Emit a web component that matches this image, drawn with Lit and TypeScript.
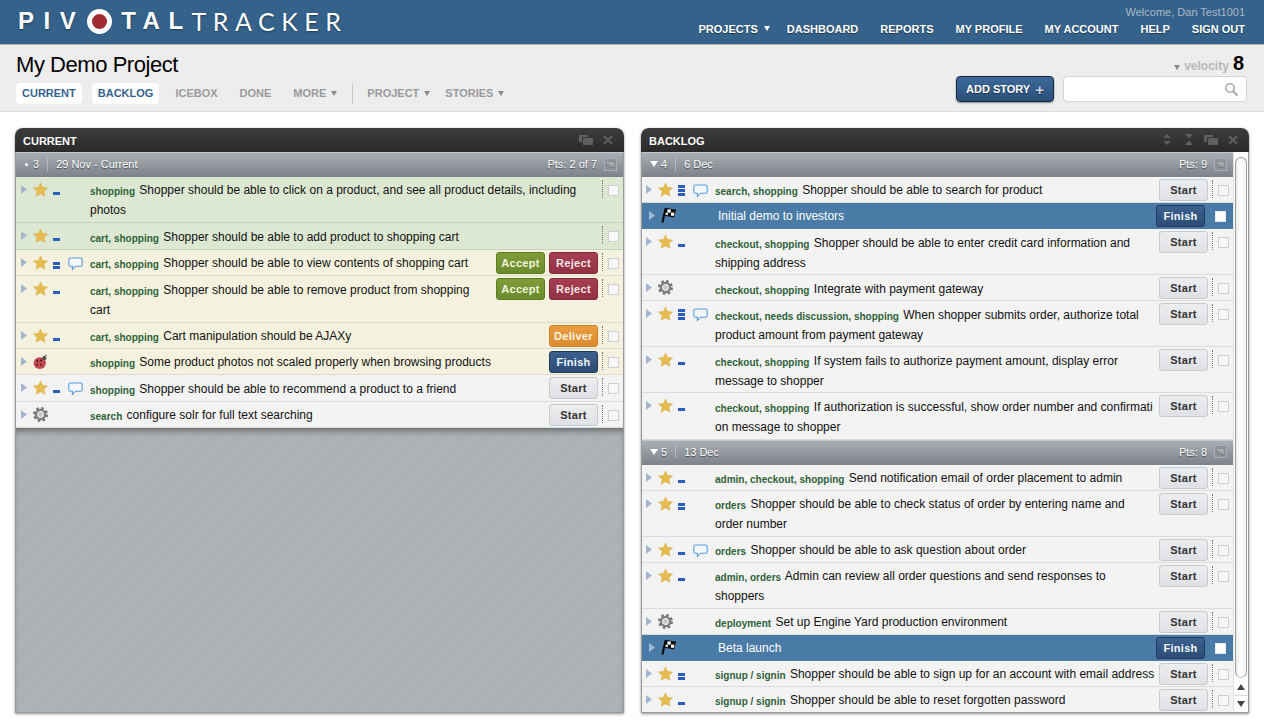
import { LitElement, css, html, svg } from 'lit';
import { customElement } from 'lit/decorators.js';

type Story = {
  kind?: 'star' | 'bug' | 'chore' | 'release';
  pts?: number;
  comment?: boolean;
  labels?: string;
  text: string;
  btn?: string[];
  tone?: string;
};

const currentStories: Story[] = [
  { kind: 'star', pts: 1, labels: 'shopping', text: 'Shopper should be able to click on a product, and see all product details, including photos', tone: 'accepted' },
  { kind: 'star', pts: 1, labels: 'cart, shopping', text: 'Shopper should be able to add product to shopping cart', tone: 'accepted' },
  { kind: 'star', pts: 2, comment: true, labels: 'cart, shopping', text: 'Shopper should be able to view contents of shopping cart', btn: ['Accept', 'Reject'], tone: 'delivered' },
  { kind: 'star', pts: 1, labels: 'cart, shopping', text: 'Shopper should be able to remove product from shopping cart', btn: ['Accept', 'Reject'], tone: 'delivered' },
  { kind: 'star', pts: 1, labels: 'cart, shopping', text: 'Cart manipulation should be AJAXy', btn: ['Deliver'], tone: 'delivered' },
  { kind: 'bug', labels: 'shopping', text: 'Some product photos not scaled properly when browsing products', btn: ['Finish'], tone: 'delivered' },
  { kind: 'star', pts: 1, comment: true, labels: 'shopping', text: 'Shopper should be able to recommend a product to a friend', btn: ['Start'] },
  { kind: 'chore', labels: 'search', text: 'configure solr for full text searching', btn: ['Start'] },
];

const backlogFirst: Story[] = [
  { kind: 'star', pts: 3, comment: true, labels: 'search, shopping', text: 'Shopper should be able to search for product', btn: ['Start'] },
  { kind: 'release', text: 'Initial demo to investors', btn: ['Finish'] },
  { kind: 'star', pts: 1, labels: 'checkout, shopping', text: 'Shopper should be able to enter credit card information and shipping address', btn: ['Start'] },
  { kind: 'chore', labels: 'checkout, shopping', text: 'Integrate with payment gateway', btn: ['Start'] },
  { kind: 'star', pts: 3, comment: true, labels: 'checkout, needs discussion, shopping', text: 'When shopper submits order, authorize total product amount from payment gateway', btn: ['Start'] },
  { kind: 'star', pts: 1, labels: 'checkout, shopping', text: 'If system fails to authorize payment amount, display error message to shopper', btn: ['Start'] },
  { kind: 'star', pts: 1, labels: 'checkout, shopping', text: 'If authorization is successful, show order number and confirmati\u200Bon message to shopper', btn: ['Start'] },
];

const backlogSecond: Story[] = [
  { kind: 'star', pts: 1, labels: 'admin, checkout, shopping', text: 'Send notification email of order placement to admin', btn: ['Start'] },
  { kind: 'star', pts: 2, labels: 'orders', text: 'Shopper should be able to check status of order by entering name and order number', btn: ['Start'] },
  { kind: 'star', pts: 1, comment: true, labels: 'orders', text: 'Shopper should be able to ask question about order', btn: ['Start'] },
  { kind: 'star', pts: 1, labels: 'admin, orders', text: 'Admin can review all order questions and send responses to shoppers', btn: ['Start'] },
  { kind: 'chore', labels: 'deployment', text: 'Set up Engine Yard production environment', btn: ['Start'] },
  { kind: 'release', text: 'Beta launch', btn: ['Finish'] },
  { kind: 'star', pts: 2, labels: 'signup / signin', text: 'Shopper should be able to sign up for an account with email address', btn: ['Start'] },
  { kind: 'star', pts: 1, labels: 'signup / signin', text: 'Shopper should be able to reset forgotten password', btn: ['Start'] },
];

const starIcon = html`<svg class="type" width="15" height="15" viewBox="0 0 16 15"><polygon points="8,0.5 10.2,5.3 15.5,5.9 11.6,9.4 12.7,14.6 8,12 3.3,14.6 4.4,9.4 0.5,5.9 5.8,5.3" fill="#e6bb50" stroke="#d9ad42" stroke-width=".6"/></svg>`;

const bugIcon = html`<svg class="type" width="15" height="16" viewBox="0 0 16 16">
  <path d="M11 3 L14.5 0.6" stroke="#666" stroke-width="1.2"/>
  <ellipse cx="7.2" cy="9.2" rx="6.6" ry="6.2" fill="#c2484f"/>
  <circle cx="12" cy="4" r="2.2" fill="#5a4a4a"/>
  <circle cx="4.6" cy="6.8" r="1.1" fill="#5a2025"/><circle cx="8.6" cy="6.4" r="1.1" fill="#5a2025"/>
  <circle cx="4.2" cy="11" r="1.1" fill="#5a2025"/><circle cx="8.6" cy="11" r="1.1" fill="#5a2025"/>
</svg>`;

const choreIcon = html`<svg class="type" width="15" height="15" viewBox="0 0 15 15">
  <circle cx="7.5" cy="7.5" r="6" fill="none" stroke="#747474" stroke-width="3" stroke-dasharray="2.4 2.3"/>
  <circle cx="7.5" cy="7.5" r="4.6" fill="none" stroke="#7e7e7e" stroke-width="2.4"/>
  <circle cx="7.5" cy="7.5" r="2.4" fill="#c8c8c8"/>
</svg>`;

const flagIcon = html`<svg class="flag" width="16" height="16" viewBox="0 0 16 16">
  <path d="M4.5 1.5 L1.5 15.5" stroke="#000" stroke-width="1.9"/>
  <path d="M4.5 1 C7 0 9 3 15 2 L13.5 10 C9 11 7 8 3 9.5 Z" fill="#111"/>
  <rect x="6.5" y="2.4" width="3.2" height="3.2" fill="#fff"/><rect x="10" y="5.6" width="3.2" height="3.2" fill="#fff"/>
  <rect x="4.6" y="5.8" width="2.4" height="2" fill="#fff"/>
</svg>`;

const commentIcon = html`<svg class="comment" width="15" height="15" viewBox="0 0 15 15"><path d="M2.5 1 H12.5 Q14.2 1 14.2 2.8 V7.4 Q14.2 9.2 12.5 9.2 H7.6 L4.4 12.4 V9.2 H2.5 Q0.8 9.2 0.8 7.4 V2.8 Q0.8 1 2.5 1 Z" fill="#f2f7fc" stroke="#5b9ad8" stroke-width="1.1"/></svg>`;

const windowIcon = svg`<path d="M0 0 H9 V2 H3 V7 H0 Z" fill="#5f5f5f"/><rect x="4" y="3" width="10" height="7" fill="#5f5f5f"/>`;
const closeIcon = svg`<path d="M1 1 L9 9 M9 1 L1 9" stroke="#5f5f5f" stroke-width="2"/>`;

@customElement('app-root')
export class AppRoot extends LitElement {
  static styles = css`
    :host {
      display: block;
      height: 724px;
      overflow: hidden;
      background: #fff;
      font-family: 'Liberation Sans', Arial, sans-serif;
      font-size: 12px;
      color: #111;
    }
    .caret {
      display: inline-block;
      width: 0;
      height: 0;
      border-left: 3px solid transparent;
      border-right: 3px solid transparent;
      border-top: 5px solid currentColor;
    }
    .top {
      height: 44px;
      background: #35628a;
      border-bottom: 1px solid #aeb2b5;
      display: flex;
      justify-content: space-between;
      padding: 0 19px 0 18px;
    }
    .logo {
      display: flex;
      align-items: center;
      height: 43px;
      padding-bottom: 1px;
      box-sizing: border-box;
      color: #fff;
      font-size: 24px;
      letter-spacing: 9.5px;
      text-shadow: 0 1px 2px rgba(0, 0, 0, .4);
      white-space: nowrap;
    }
    .logo b { font-weight: 700; }
    .logo b.tal { letter-spacing: 8.5px; }
    .logo span { font-family: Lato, sans-serif; font-weight: 400; letter-spacing: 6.5px; font-size: 25px; }
    .logo i {
      width: 15px;
      height: 15px;
      border: 5px solid #fff;
      border-radius: 50%;
      background: #a02c32;
      margin: 0 9px 0 2px;
      flex: none;
    }
    .usernav { text-align: right; padding-top: 5px; }
    .welcome { font-size: 11px; line-height: 15px; color: #a9b9c8; }
    .links {
      display: flex;
      gap: 22px;
      margin-top: 2px;
      font-size: 11px;
      line-height: 15px;
      font-weight: 700;
      color: #fff;
      text-shadow: 0 1px 1px rgba(0, 0, 0, .45);
    }
    .links .caret { margin: 0 -5px 0 6px; vertical-align: 2px; }
    .sub {
      height: 66px;
      background: #ededed;
      border-bottom: 1px solid #dcdcdc;
      display: flex;
      justify-content: space-between;
      padding: 0 17px 0 16px;
    }
    h1 {
      margin: 7px 0 0;
      font-size: 22px;
      line-height: 26px;
      font-weight: 400;
      letter-spacing: -.45px;
      color: #000;
    }
    .tabs {
      display: flex;
      align-items: center;
      margin-top: 5px;
      height: 21px;
      font-size: 11px;
      font-weight: 700;
      color: #9a9a9a;
    }
    .tabs a { padding: 0 6px; margin-right: 10px; line-height: 21px; white-space: nowrap; }
    .tabs a.on { background: #fff; color: #33648f; border-radius: 4px; }
    .tabs a.on + a.on { margin-right: 16px; }
    .tabs a.plain { padding: 0; margin-right: 22px; }
    .tabs a.menu { margin-right: 15px; }
    .tabs .caret { margin-left: 5px; vertical-align: 1px; color: #8a8a8a; }
    .tabs .sep { width: 1px; height: 21px; background: #c9c9c9; margin: 0 14px 0 0; }
    .right { display: flex; flex-direction: column; align-items: flex-end; }
    .velocity {
      display: flex;
      align-items: baseline;
      margin-top: 7px;
      height: 24px;
      font-weight: 700;
      color: #b8b8b8;
      margin-right: 3px;
    }
    .velocity .caret { color: #888; margin: 0 4px 1px 0; }
    .velocity b { color: #000; font-size: 20px; margin-left: 4px; }
    .actions-top { display: flex; gap: 9px; }
    .add {
      width: 98px;
      height: 26px;
      box-sizing: border-box;
      border: 1px solid #12263c;
      border-radius: 4px;
      background: linear-gradient(#3c6a99, #2b4f7a);
      box-shadow: 0 1px 2px rgba(0, 0, 0, .4);
      color: #fff;
      font-size: 11px;
      font-weight: 700;
      display: flex;
      align-items: center;
      justify-content: center;
      gap: 5px;
      text-shadow: 0 1px 1px rgba(0, 0, 0, .5);
    }
    .add em { font-style: normal; font-size: 15px; font-weight: 700; color: #cdd8e3; line-height: 15px; }
    .search {
      width: 184px;
      height: 26px;
      box-sizing: border-box;
      background: #fff;
      border: 1px solid #d4d4d4;
      border-radius: 4px;
      display: flex;
      align-items: center;
      justify-content: flex-end;
      padding-right: 7px;
    }
    .main { display: flex; gap: 17px; padding: 16px 15px 0; }
    .panel {
      width: 609px;
      height: 585px;
      display: flex;
      flex-direction: column;
      box-shadow: 0 1px 3px rgba(0, 0, 0, .45);
      border-radius: 8px 8px 0 0;
      background: #fff;
    }
    .panel + .panel { width: 608px; }
    .panel + .panel .row { padding-left: 4px; }
    .panel + .panel .row.release { padding-left: 7px; }
    .phead {
      flex: none;
      height: 24px;
      box-sizing: border-box;
      border-radius: 8px 8px 0 0;
      background: linear-gradient(#3d3d3d, #2a2a2a);
      color: #fff;
      font-size: 11px;
      font-weight: 700;
      display: flex;
      align-items: center;
      padding: 1px 11px 0 8px;
      gap: 10px;
    }
    .phead span { flex: 1; }
    .phead svg { display: block; margin-bottom: 2px; }
    .phead svg.hourglass { margin-left: 2px; }
    .pbody {
      flex: 1;
      min-height: 0;
      display: flex;
      border: 1px solid #9a9a9a;
      border-width: 0 1px 1px;
    }
    .list { flex: 1; min-width: 0; overflow: hidden; display: flex; flex-direction: column; }
    .hatch {
      flex: 1;
      background: repeating-linear-gradient(135deg, #abb1b3 0 8px, #aeb4b6 8px 16px);
      box-shadow: inset 0 6px 6px -3px rgba(0, 0, 0, .4);
    }
    .iter {
      flex: none;
      height: 25px;
      box-sizing: border-box;
      border-top: 1px solid #c3c7ca;
      background: linear-gradient(#a9aeb3, #7c828a);
      color: #fff;
      font-size: 11px;
      display: flex;
      align-items: center;
      padding: 0 6px 2px 8px;
      text-shadow: 0 1px 1px rgba(0, 0, 0, .5);
      white-space: nowrap;
    }
    .iter .mark { width: 9px; display: flex; align-items: center; }
    .iter .mark i { display: block; width: 3px; height: 3px; border-radius: 50%; background: #fff; margin-left: 1px; }
    .iter .mark.open { margin-right: 2px; }
    .iter .mark .caret { border-left-width: 4px; border-right-width: 4px; border-top-width: 6px; }
    .iter .num { margin-right: 8px; }
    .iter .bar { width: 1px; height: 13px; background: #b6babe; margin-right: 8px; }
    .iter .spacer { flex: 1; }
    .iter .pct {
      width: 13px;
      height: 13px;
      margin-left: 7px;
      background: #8c9298;
      border: 1px solid #a9aeb3;
      box-sizing: border-box;
      font-size: 8px;
      line-height: 11px;
      text-align: center;
      color: #dfe2e5;
    }
    .row {
      flex: none;
      display: flex;
      align-items: flex-start;
      box-sizing: border-box;
      padding: 0 4px 0 5px;
      background: #f3f3f3;
      border-bottom: 1px solid #dcdcdc;
    }
    .row.accepted { background: #dde8d3; border-bottom-color: #c8d3bf; }
    .row.delivered { background: #f4f2de; border-bottom-color: #dfddc8; }
    .row.release { background: #4a7ba6; border-bottom-color: #4a7ba6; color: #fff; }
    .arrow { flex: none; width: 12px; margin-top: 8px; height: 9px; }
    .icons { flex: none; display: flex; width: 57px; height: 20px; }
    .slot-type { width: 20px; flex: none; }
    .type { display: block; margin-top: 5px; }
    .flag { display: block; margin-top: 4px; }
    .slot-pts { width: 15px; flex: none; display: flex; flex-direction: column; justify-content: flex-end; gap: 1px; height: 19px; }
    .slot-pts i { display: block; width: 7px; height: 3px; background: #2a5fc0; }
    .slot-pts i:only-child { margin-bottom: 1px; }
    .comment { display: block; margin-top: 7px; }
    .body {
      flex: 1;
      min-width: 0;
      padding: 3.4px 0 1.7px;
      line-height: 20px;
      color: #111;
    }
    .panel:first-child .body { padding-bottom: 2px; }
    .row.release .body { color: #fff; }
    .tag { font-size: 10px; line-height: 1; font-weight: 700; color: #2e6239; position: relative; top: 1px; margin-right: 1px; }
    .acts { flex: none; display: flex; gap: 4px; margin: 2px 0 0 4px; }
    .btn {
      width: 49px;
      height: 22px;
      box-sizing: border-box;
      border-radius: 3px;
      border: 1px solid #c6cbd0;
      background: linear-gradient(#ebedef, #dfe1e4);
      color: #333;
      font-size: 11px;
      font-weight: 700;
      line-height: 20px;
      text-align: center;
      letter-spacing: .3px;
    }
    .btn.Accept { background: linear-gradient(#7f9c38, #6b8b2b); border-color: #5d7c22; color: #eef3df; }
    .btn.Reject { background: linear-gradient(#a63e52, #933144); border-color: #85293b; color: #f5e6e9; }
    .btn.Deliver { background: linear-gradient(#e99c40, #dc8c32); border-color: #cf8128; color: #fdf3e4; }
    .btn.Finish { background: linear-gradient(#3c608d, #2d4c75); border-color: #1f3b5e; color: #f0f4f8; }
    .dots { flex: none; width: 0; height: 18px; margin: 3px 0 0 4px; border-left: 1px dotted #777; }
    .check {
      flex: none;
      width: 11px;
      height: 11px;
      box-sizing: border-box;
      margin: 8px 0 0 5px;
      background: #f7f7f7;
      border: 1px solid #cfcfcf;
    }
    .row.release .dots { visibility: hidden; margin-left: 0; border: none; }
    .row.release .check { background: #fff; border-color: #e8e8e8; margin-left: 10px; margin-right: 3px; }
    .scroll {
      flex: none;
      width: 15px;
      display: flex;
      flex-direction: column;
      background: #fff;
      border-left: 1px solid #e2e2e2;
      box-sizing: border-box;
      padding-top: 5px;
    }
    .thumb {
      flex: 1;
      margin: 0 1px;
      border: 1px solid #9c9c9c;
      border-bottom-color: #ccc;
      border-radius: 7px;
      background: linear-gradient(90deg, #e9e9e9, #fff 40%, #f2f2f2);
    }
    .sarrow { flex: none; height: 16px; display: flex; align-items: center; justify-content: center; color: #444; border-top: 1px solid #ddd; }
    .sarrow.first { border-top: none; margin-top: 1px; }
    .sarrow .up { border-left: 4px solid transparent; border-right: 4px solid transparent; border-bottom: 6px solid #444; width: 0; height: 0; }
    .sarrow .caret { border-left-width: 4px; border-right-width: 4px; border-top-width: 6px; }
  `;

  renderRow(s: Story) {
    const release = s.kind === 'release';
    return html`
      <div class="row ${s.tone ?? ''} ${release ? 'release' : ''}">
        <svg class="arrow" viewBox="0 0 12 9"><polygon points="0,0 6,4.5 0,9" fill="${release ? '#9dbbd4' : '#a4b6cf'}"/></svg>
        <div class="icons">
          <div class="slot-type">
            ${s.kind === 'star' ? starIcon : s.kind === 'bug' ? bugIcon : s.kind === 'chore' ? choreIcon : flagIcon}
          </div>
          <div class="slot-pts">${Array.from({ length: s.pts ?? 0 }, () => html`<i></i>`)}</div>
          <div>${s.comment ? commentIcon : null}</div>
        </div>
        <div class="body">
          ${s.labels ? html`<span class="tag">${s.labels}</span> ` : null}${s.text}
        </div>
        ${s.btn ? html`<div class="acts">${s.btn.map((b) => html`<div class="btn ${b}">${b}</div>`)}</div>` : null}
        <div class="dots"></div>
        <div class="check"></div>
      </div>
    `;
  }

  renderIter(open: boolean, num: string, date: string, pts: string) {
    return html`
      <div class="iter">
        <span class="mark ${open ? 'open' : ''}">${open ? html`<span class="caret"></span>` : html`<i></i>`}</span><span class="num">${num}</span><span class="bar"></span><span>${date}</span>
        <span class="spacer"></span><span>${pts}</span><span class="pct">%</span>
      </div>
    `;
  }

  render() {
    return html`
      <div class="top">
        <div class="logo"><b>PIV</b><i></i><b class="tal">TAL</b><span>TRACKER</span></div>
        <div class="usernav">
          <div class="welcome">Welcome, Dan Test1001</div>
          <div class="links">
            <span>PROJECTS<span class="caret"></span></span>
            <span>DASHBOARD</span><span>REPORTS</span><span>MY PROFILE</span><span>MY ACCOUNT</span><span>HELP</span><span>SIGN OUT</span>
          </div>
        </div>
      </div>
      <div class="sub">
        <div>
          <h1>My Demo Project</h1>
          <div class="tabs">
            <a class="on">CURRENT</a><a class="on">BACKLOG</a>
            <a class="plain">ICEBOX</a><a class="plain">DONE</a>
            <a class="plain menu">MORE<span class="caret"></span></a><span class="sep"></span>
            <a class="plain menu">PROJECT<span class="caret"></span></a><a class="plain">STORIES<span class="caret"></span></a>
          </div>
        </div>
        <div class="right">
          <div class="velocity"><span class="caret"></span>velocity<b>8</b></div>
          <div class="actions-top">
            <div class="add">ADD STORY <em>+</em></div>
            <div class="search">
              <svg width="15" height="15" viewBox="0 0 15 15"><circle cx="6" cy="6" r="4.2" fill="none" stroke="#aaa" stroke-width="1.6"/><path d="M9.2 9.2 L13.5 13.5" stroke="#aaa" stroke-width="2.2"/></svg>
            </div>
          </div>
        </div>
      </div>
      <div class="main">
        <section class="panel">
          <div class="phead">
            <span>CURRENT</span>
            <svg width="14" height="10" viewBox="0 0 14 10">${windowIcon}</svg>
            <svg width="10" height="10" viewBox="0 0 10 10">${closeIcon}</svg>
          </div>
          <div class="pbody">
            <div class="list">
              ${this.renderIter(false, '3', '29 Nov - Current', 'Pts: 2 of 7')}
              ${currentStories.map((s) => this.renderRow(s))}
              <div class="hatch"></div>
            </div>
          </div>
        </section>
        <section class="panel">
          <div class="phead">
            <span>BACKLOG</span>
            <svg width="10" height="11" viewBox="0 0 10 11"><path d="M5 0 L9 4 H1 Z M5 11 L9 7 H1 Z" fill="#5f5f5f"/></svg>
            <svg class="hourglass" width="10" height="11" viewBox="0 0 10 11"><path d="M1 0 H9 L5 4.5 Z M1 11 H9 L5 6.5 Z" fill="#5f5f5f"/></svg>
            <svg width="14" height="10" viewBox="0 0 14 10">${windowIcon}</svg>
            <svg width="10" height="10" viewBox="0 0 10 10">${closeIcon}</svg>
          </div>
          <div class="pbody">
            <div class="list">
              ${this.renderIter(true, '4', '6 Dec', 'Pts: 9')}
              ${backlogFirst.map((s) => this.renderRow(s))}
              ${this.renderIter(true, '5', '13 Dec', 'Pts: 8')}
              ${backlogSecond.map((s) => this.renderRow(s))}
            </div>
            <div class="scroll">
              <div class="thumb"></div>
              <div class="sarrow first"><span class="up"></span></div>
              <div class="sarrow"><span class="caret"></span></div>
            </div>
          </div>
        </section>
      </div>
    `;
  }
}
